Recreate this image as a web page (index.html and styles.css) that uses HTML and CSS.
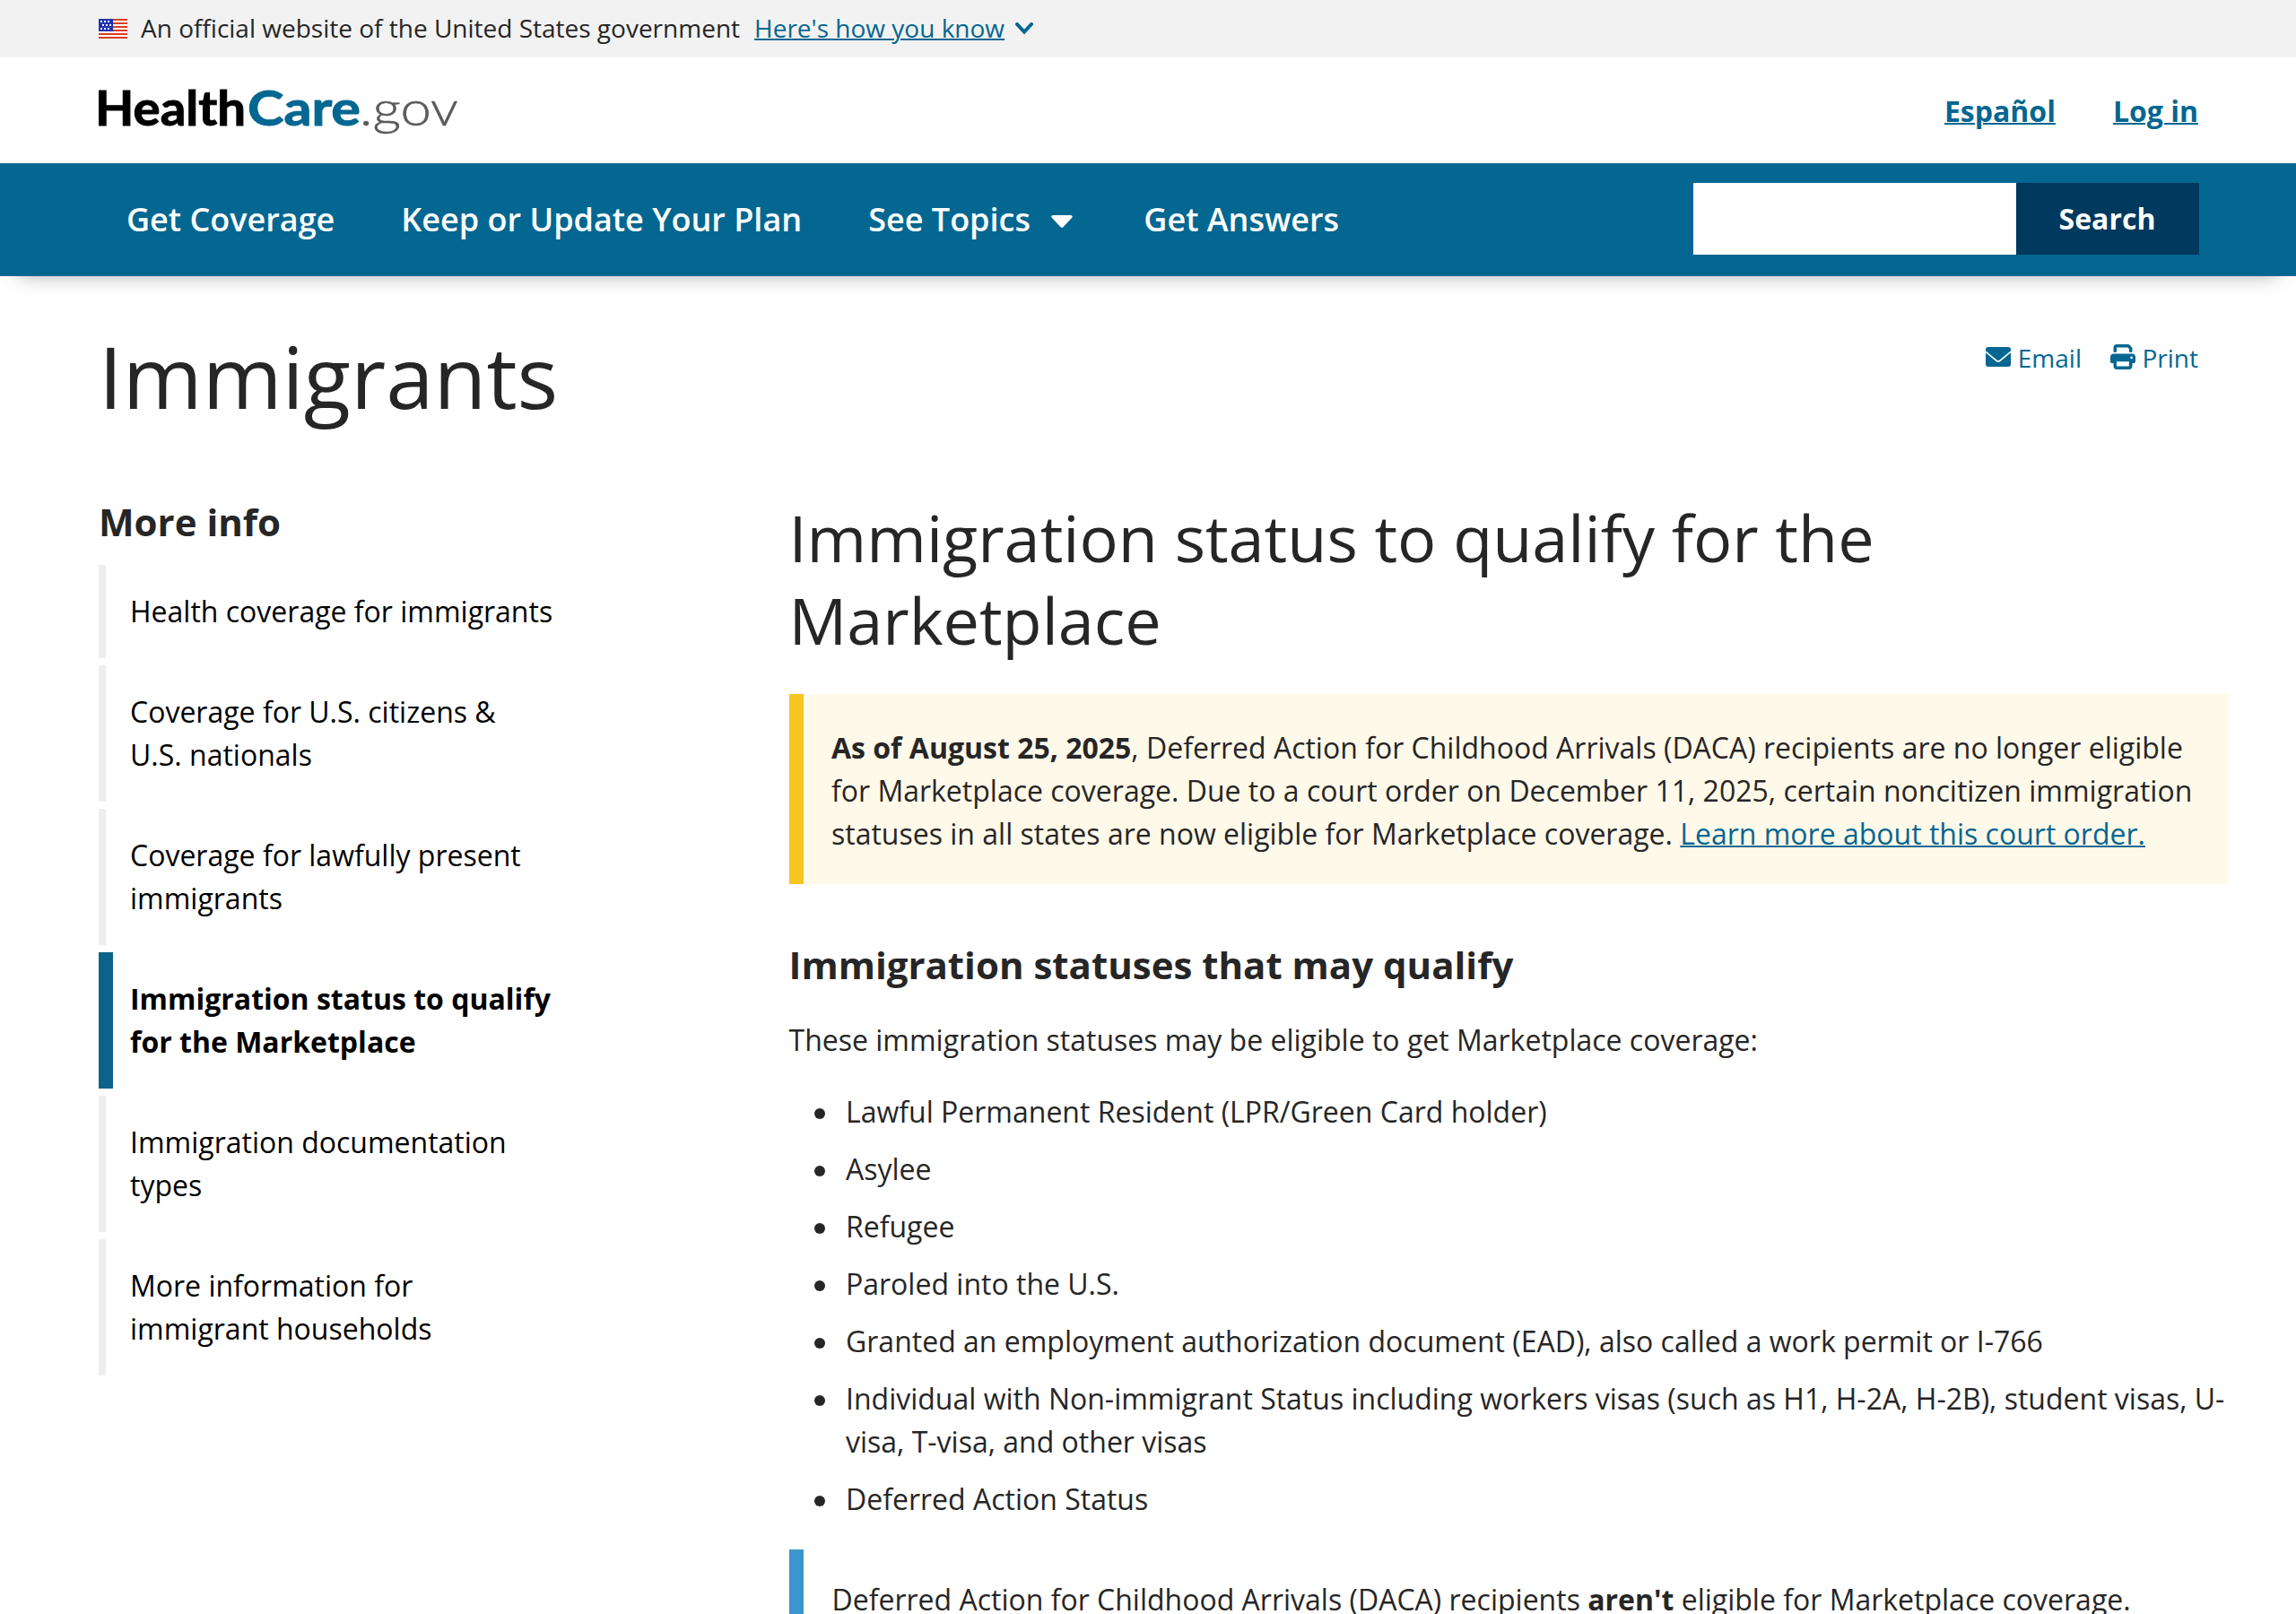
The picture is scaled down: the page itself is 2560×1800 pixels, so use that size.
FILE: index.html
```html
<!DOCTYPE html>
<html lang="en">
<head>
    <meta charset="UTF-8">
    <meta name="viewport" content="width=device-width, initial-scale=1.0">
    <title>Immigration status to qualify for the Marketplace | HealthCare.gov</title>
    <link rel="stylesheet" href="styles.css">
</head>
<body>

    <!-- gov banner -->
    <div class="usa-banner">
      <svg class="flag" viewBox="0 0 32 22" width="32" height="22" shape-rendering="crispEdges">
        <rect width="32" height="22" fill="#fff"/>
        <path fill="#db3e1f" d="M0 0h32v2H0zM0 4h32v2H0zM0 8h32v2H0zM0 12h32v2H0zM0 16h32v2H0zM0 20h32v2H0z"/>
        <rect width="16" height="14" fill="#1e33b1"/>
        <path fill="#fff" d="M2 2h2v2H2zM6 2h2v2H6zM10 2h2v2h-2zM4 6h2v2H4zM8 6h2v2H8zM12 6h2v2h-2zM2 10h2v2H2zM6 10h2v2H6zM10 10h2v2h-2z"/>
      </svg>
      <span class="banner-text">An official website of the United States government</span>
      <a href="#" class="banner-text banner-link">Here's how you know</a>
      <svg class="chevron" viewBox="0 0 20 14" width="20" height="14">
        <path d="M2 2l8 8.500L18 2" fill="none" stroke="#046791" stroke-width="4" stroke-linecap="round"/>
      </svg>
    </div>

    <header class="header">
      <a href="#" class="logo">
        <svg viewBox="0 0 404 60" width="404" height="60">
          <text x="-4" y="46" textLength="168" lengthAdjust="spacingAndGlyphs" class="logo-health">Health</text>
          <text x="166" y="46" textLength="126" lengthAdjust="spacingAndGlyphs" class="logo-care">Care</text>
          <text x="291" y="46" textLength="110" lengthAdjust="spacingAndGlyphs" class="logo-gov">.gov</text>
        </svg>
      </a>
      <div class="header-links">
        <a href="#">Español</a>
        <a href="#">Log in</a>
      </div>
    </header>

    <nav class="nav">
      <ul class="nav-list">
        <li><a href="#">Get Coverage</a></li>
        <li><a href="#">Keep or Update Your Plan</a></li>
        <li>
          <a href="#">See Topics
            <svg class="caret" viewBox="0 0 24 14" width="24" height="14"><path fill="#fff" d="M2 0h20c1.600 0 2.300 1.700 1.200 2.800l-9.800 10.400c-.8.800-2 .8-2.800 0L.8 2.800C-.3 1.700.4 0 2 0z"/></svg>
          </a>
        </li>
        <li><a href="#">Get Answers</a></li>
      </ul>
      <form class="search">
        <input type="text" class="search-input" aria-label="Search">
        <button type="button" class="search-btn">Search</button>
      </form>
    </nav>

    <div class="title-row">
      <h1>Immigrants</h1>
      <div class="share">
        <a href="#">
          <svg class="icon" viewBox="0 0 28 28" width="28" height="28">
            <path fill="#046791" d="M3 3h22a3 3 0 0 1 3 3v1.200L15.500 17.500a2.400 2.400 0 0 1-3 0L0 7.200V6a3 3 0 0 1 3-3z"/>
            <path fill="#046791" d="M0 9.300l11.600 9.700a3.800 3.800 0 0 0 4.800 0L28 9.300V22a3 3 0 0 1-3 3H3a3 3 0 0 1-3-3z"/>
          </svg>
          Email
        </a>
        <a href="#">
          <svg class="icon" viewBox="0 0 512 512" width="28" height="28">
            <path fill="#046791" d="M128 0C92.700 0 64 28.700 64 64v96h64V64h226.700L384 93.300V160h64V93.300c0-17-6.700-33.300-18.700-45.300L400 18.700C388 6.700 371.700 0 354.700 0H128zM384 352v96H128v-96h256zm64 32h32c17.700 0 32-14.300 32-32V256c0-35.300-28.700-64-64-64H64c-35.300 0-64 28.700-64 64v96c0 17.700 14.300 32 32 32h32v64c0 35.300 28.700 64 64 64h256c35.300 0 64-28.700 64-64v-64zM432 248a24 24 0 1 1 0 48 24 24 0 1 1 0-48z"/>
          </svg>
          Print
        </a>
      </div>
    </div>

    <div class="content">
      <aside class="sidebar">
        <h2>More info</h2>
        <ul>
          <li><a href="#">Health coverage for immigrants</a></li>
          <li><a href="#">Coverage for U.S. citizens &amp; U.S.&nbsp;nationals</a></li>
          <li><a href="#">Coverage for lawfully present immigrants</a></li>
          <li class="active"><a href="#">Immigration status to qualify for the Marketplace</a></li>
          <li><a href="#">Immigration documentation types</a></li>
          <li><a href="#">More information for immigrant&nbsp;households</a></li>
        </ul>
      </aside>

      <main class="main">
        <h2>Immigration status to qualify for the Marketplace</h2>

        <div class="alert">
          <b>As of August 25, 2025</b>, Deferred Action for Childhood Arrivals (DACA) recipients are no longer eligible for Marketplace coverage. Due to a court order on December 11, 2025, certain noncitizen immigration statuses in all states are now eligible for Marketplace coverage. <a href="#">Learn more about this court order.</a>
        </div>

        <h3>Immigration statuses that may qualify</h3>
        <p>These immigration statuses may be eligible to get Marketplace coverage:</p>

        <ul class="status-list">
          <li>Lawful Permanent Resident (LPR/Green Card holder)</li>
          <li>Asylee</li>
          <li>Refugee</li>
          <li>Paroled into the U.S.</li>
          <li>Granted an employment authorization document (EAD), also called a work permit or I-766</li>
          <li>Individual with Non-immigrant Status including workers visas (such as H1, H-2A, H-2B), student visas, U-visa, T-visa, and other visas</li>
          <li>Deferred Action Status</li>
        </ul>

        <div class="callout">
          Deferred Action for Childhood Arrivals (DACA) recipients <b>aren't</b> eligible for Marketplace coverage.
        </div>
      </main>
    </div>

</body>
</html>
```

FILE: styles.css
```css
*,
*::before,
*::after {
  box-sizing: border-box;
}

html,
body {
  height: 1800px;
  overflow: hidden;
}

body {
  margin: 0;
  background-color: #ffffff;
  color: #262626;
  font-family: "Open Sans", sans-serif;
  font-size: 32px;
  line-height: 48px;
}

a {
  color: #046791;
}

h1, h2, h3, p, ul {
  margin: 0;
  padding: 0;
}

ul {
  list-style: none;
}

/* banner */
.usa-banner {
  display: flex;
  align-items: center;
  height: 64px;
  padding: 0 110px;
  background-color: #f2f2f2;
  font-size: 28px;
  line-height: 42px;
}

.flag {
  margin-right: 15px;
}

.banner-text {
  padding-bottom: 2px;
}

.banner-link {
  margin-left: 16px;
  text-decoration-thickness: 2px;
}

.chevron {
  margin-left: 12px;
}

/* header */
.header {
  display: flex;
  justify-content: space-between;
  height: 118px;
  padding: 30px 109px 0 110px;
}

.logo svg {
  display: block;
  overflow: visible;
}

.logo-health,
.logo-care {
  font-family: Lato, sans-serif;
  font-size: 53px;
  font-weight: 700;
  stroke-width: 1px;
}

.logo-health {
  fill: #000000;
  stroke: #000000;
}

.logo-care {
  fill: #046791;
  stroke: #046791;
}

.logo-gov {
  font-family: Lato, sans-serif;
  font-size: 53px;
  font-weight: 300;
  fill: #5a5a5a;
  stroke: #5a5a5a;
  stroke-width: 0.5px;
}

.header-links {
  display: flex;
  gap: 64px;
  padding-top: 6px;
  font-weight: 700;
}

.header-links a {
  text-decoration-thickness: 2px;
}

/* nav */
.nav {
  display: flex;
  justify-content: space-between;
  height: 126px;
  padding: 22px 108px 0 141px;
  background-color: #046791;
  box-shadow: 0 20px 20px -20px rgba(0, 0, 0, 0.3);
}

.nav-list {
  display: flex;
  gap: 74px;
  padding-top: 14px;
  font-size: 36px;
  font-weight: 600;
  line-height: 54px;
}

.nav-list a {
  color: #ffffff;
  text-decoration: none;
}

.caret {
  margin: 0 5px 4px 14px;
}

.search {
  display: flex;
  height: 80px;
}

.search-input {
  width: 360px;
  border: 0;
  background-color: #ffffff;
}

.search-btn {
  width: 204px;
  padding: 0 7px 2px 6px;
  border: 0;
  background-color: #00395e;
  color: #ffffff;
  font-family: inherit;
  font-size: 32px;
  font-weight: 700;
}

/* title */
.title-row {
  display: flex;
  justify-content: space-between;
  height: 240px;
  padding: 48px 109px 0 110px;
}

h1 {
  font-size: 96px;
  font-weight: 400;
  line-height: 125px;
}

.share {
  display: flex;
  gap: 32px;
  padding-top: 22px;
  font-size: 28px;
  line-height: 42px;
}

.share a {
  display: flex;
  height: 42px;
  text-decoration: none;
}

.icon {
  margin: 6px 7.5px 0 0;
}

/* content */
.content {
  display: flex;
}

.sidebar {
  width: 879.5px;
  padding: 6px 0 0 110px;
}

.sidebar h2 {
  margin-bottom: 21px;
  font-size: 42px;
  line-height: 55px;
}

.sidebar li {
  width: 520px;
  margin-bottom: 8px;
  padding: 28px 0 28px 27px;
  border-left: 8px solid #eeeeee;
}

.sidebar .active {
  padding-left: 19px;
  border-left: 16px solid #0c6389;
}

.sidebar .active a {
  font-weight: 700;
}

.sidebar a {
  color: #000000;
  text-decoration: none;
}

.main {
  width: 1604.5px;
  padding-top: 5px;
}

.main h2 {
  font-size: 72px;
  font-weight: 400;
  line-height: 92px;
}

.alert {
  margin-top: 37px;
  padding: 36px 32px 32px 31.5px;
  border-left: 16px solid #f8c41f;
  background-color: #fff9e9;
}

.alert a {
  text-decoration-thickness: 2px;
}

.main h3 {
  margin-top: 62px;
  font-size: 42px;
  line-height: 55px;
}

.main p {
  margin-top: 33px;
}

.status-list {
  padding: 32px 0 0 63.5px;
}

.status-list li {
  position: relative;
  margin-bottom: 16px;
}

.status-list li::before {
  content: "";
  position: absolute;
  left: -35px;
  top: 20px;
  width: 12px;
  height: 12px;
  border-radius: 50%;
  background-color: #262626;
}

.callout {
  margin-top: 32px;
  padding: 32px;
  border-left: 16px solid #3e94cf;
}
```
